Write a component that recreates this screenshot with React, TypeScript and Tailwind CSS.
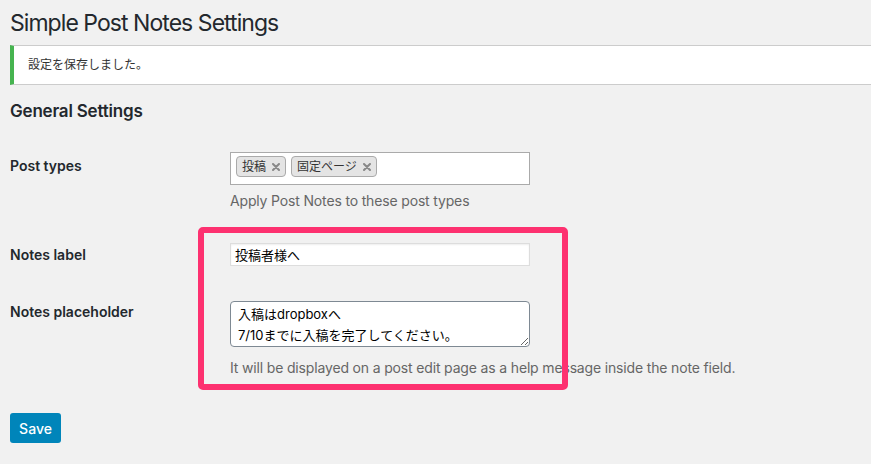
const font = "font-['Inter','Noto_Sans_CJK_JP',sans-serif]";

function Token({ label }: { label: string }) {
  return (
    <span className="flex h-[21px] items-center gap-[6px] rounded-[4px] border border-[#aaa] bg-[#e4e4e4] px-[5px] text-[12px] text-[#333]">
      {label}
      <svg width="8" height="8" viewBox="0 0 8 8" className="text-[#888]">
        <path d="M1 1L7 7M7 1L1 7" stroke="currentColor" strokeWidth="2" strokeLinecap="round" />
      </svg>
    </span>
  );
}

export default function App() {
  return (
    <div className={`relative min-h-screen bg-[#f1f1f1] text-[#23282d] ${font}`}>
      <h1 className="pl-[10px] pt-[9px] text-[23px] leading-[29px] font-normal tracking-[-0.95px]">Simple Post Notes Settings</h1>

      <div className="ml-[10px] mt-[7px] flex h-[40px] items-center border-y border-l-4 border-y-[#ccc] border-l-[#46b450] bg-white pl-[14px] text-[12px] text-[#333]">
        設定を保存しました。
      </div>

      <div className="px-[10px]">
        <h2 className="mt-[15px] text-[17px] leading-[22px] font-semibold tracking-[-0.2px]">General Settings</h2>

        <div className="mt-[30px] flex">
          <div className="w-[220px] pt-[4px] text-[14px] leading-[20px] font-semibold">Post types</div>
          <div>
            <div className="flex h-[33px] w-[300px] gap-[5px] border border-[#aaa] bg-white pl-[5px] pt-[3px]">
              <Token label="投稿" />
              <Token label="固定ページ" />
            </div>
            <p className="mt-[6px] text-[14px] leading-[20px] tracking-[-0.16px] text-[#666]">Apply Post Notes to these post types</p>
          </div>
        </div>

        <div className="mt-[32px] flex">
          <div className="w-[220px] pt-[2px] text-[14px] leading-[20px] font-semibold">Notes label</div>
          <input
            type="text"
            defaultValue="投稿者様へ"
            className="h-[23px] w-[300px] border border-[#ddd] bg-white px-[4px] text-[13px] text-[#000] shadow-[inset_0_1px_2px_rgba(0,0,0,0.07)] outline-none"
          />
        </div>

        <div className="mt-[35px] flex">
          <div className="w-[220px] pt-[1px] text-[14px] leading-[20px] font-semibold">Notes placeholder</div>
          <div>
            <textarea
              defaultValue={"入稿はdropboxへ\n7/10までに入稿を完了してください。"}
              className="block h-[46px] w-[300px] rounded-[4px] border border-[#7e8993] bg-white px-[7px] pt-[2px] text-[13px] leading-[21px] text-[#000] outline-none"
            />
            <p className="mt-[11px] text-[14px] leading-[20px] tracking-[-0.16px] text-[#666]">
              It will be displayed on a post edit page as a help message inside the note field.
            </p>
          </div>
        </div>

        <button className="mt-[35px] h-[30px] w-[51px] rounded-[3px] bg-[#0085ba] text-[14px] font-medium text-white">
          Save
        </button>
      </div>

      <div className="absolute left-[198px] top-[227px] h-[163px] w-[370px] rounded-[5px] border-[6px] border-[#fd3170]" />
    </div>
  );
}
